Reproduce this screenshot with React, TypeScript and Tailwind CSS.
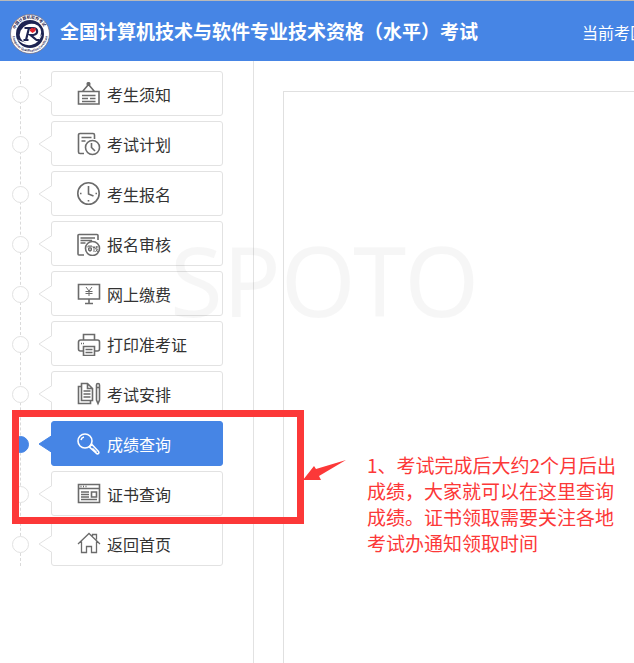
import type { ReactNode } from "react";

type MenuItem = { label: string; icon: ReactNode; active?: boolean };

const MENU: MenuItem[] = [
  {
    label: "考生须知",
    icon: (
      <>
        <path d="M1.500 9.500h20.500v12.500h-20.500zM5.500 9.500l6-7 6 7M5 13.500h13.500M5 16.500h6M13 16.500h5.500M5 19.500h13.500" />
        <circle cx="11.500" cy="2" r="1.300" fill="currentColor" />
      </>
    ),
  },
  {
    label: "考试计划",
    icon: (
      <>
        <path d="M7 21.500H3a1.500 1.500 0 0 1-1.500-1.500V3A1.500 1.500 0 0 1 3 1.500h13A1.500 1.500 0 0 1 17.500 3v4M4.500 5.500h10M4.500 9h4" />
        <circle cx="15.500" cy="15.500" r="7" />
        <path d="M14.500 11v4.500l3.500 3.500" />
      </>
    ),
  },
  {
    label: "考生报名",
    icon: (
      <>
        <circle cx="11.500" cy="11.500" r="10.700" />
        <path d="M11.500 4v8l5 2M3 11.500h1.500M18.500 11.500h1.500M11.500 18v1.500" />
      </>
    ),
  },
  {
    label: "报名审核",
    icon: (
      <g transform="translate(0 1)">
        <path d="M7 22H2a1 1 0 0 1-1-1V2.500a1 1 0 0 1 1-1h18a1 1 0 0 1 1 1V7M3.500 5h14.500M3.500 7.500h11.500M3.500 10h5" />
        <circle cx="15.500" cy="15.500" r="7" />
        <path
          d="M11 14.500v-1.500h4v1.500M11.500 15h3v2.500h-3zM13 13v6M17 13v6M16 14.500h2M18.500 14h2.500M20 13l-1.500 3h2l-2 3M19.500 17l1.500 2"
          strokeWidth="1"
        />
      </g>
    ),
  },
  {
    label: "网上缴费",
    icon: (
      <>
        <path d="M1.500 2.500h21v14.500h-21zM12 17v4M8 21.500h8" />
        <path d="m9 5 3 4 3-4M12 9v5M8.500 9.500h7M8.500 11.500h7" strokeWidth="1" />
      </>
    ),
  },
  {
    label: "打印准考证",
    icon: (
      <>
        <path d="M6.500 8V2.500h11V8M6.500 19h-3a2 2 0 0 1-2-2v-7a2 2 0 0 1 2-2h17a2 2 0 0 1 2 2v7a2 2 0 0 1-2 2h-3M6.500 14.500h11v9h-11zM8.500 17.500h7M8.500 20.500h7" />
        <path d="M4 11.500h1M6 11.500h1" />
      </>
    ),
  },
  {
    label: "考试安排",
    icon: (
      <>
        <path d="M4 4.500H1.500v17h12V19M4.500 1.500h6l5 5v12h-11zM10.500 1.500v5h5M6.500 9h7M6.500 12h7M6.500 15h7" />
        <path d="M19.500 5.500h3V18l-1.500 3.500-1.500-3.500zM19.500 3a1.500 1.500 0 0 1 3 0v2.500h-3z" />
      </>
    ),
  },
  {
    label: "成绩查询",
    active: true,
    icon: (
      <>
        <circle cx="8" cy="9" r="7" />
        <path d="M4 8a4 4 0 0 1 3-3M13 14l2-1.500 6.500 7a1.300 1.300 0 0 1-2 2L12.500 15zM15.500 16.500l4 4" />
      </>
    ),
  },
  {
    label: "证书查询",
    icon: (
      <>
        <path d="M1.500 2.500h21v18h-21zM1.500 6.500h21M3.500 4.500h1M6 4.500h1M8.500 4.500h1" />
        <path d="M4 10h8M4 12.500h8M4 15h8M4 17.500h16M14.500 10h5v5h-5z" />
      </>
    ),
  },
  {
    label: "返回首页",
    icon: (
      <path
        d="M1 12 12 1.500 23 12M4.500 9.500v11h5v-6h5v6h5v-11M15.500 4V2.500h4v5"
        strokeWidth="1.300"
      />
    ),
  },
];

function Logo() {
  return (
    <svg viewBox="0 0 40 40" className="h-10 w-10 shrink-0" aria-hidden="true">
      <defs>
        <path id="seal-top" d="M4.600 20a15.400 15.400 0 0 1 30.800 0" />
        <path id="seal-bottom" d="M2.300 20a17.700 17.700 0 0 0 35.400 0" />
      </defs>
      <circle cx="20" cy="20" r="19.500" fill="#fff" stroke="#777184" strokeWidth="0.800" />
      <circle cx="20" cy="20" r="14" fill="#1d2452" />
      <ellipse cx="20.500" cy="19.500" rx="11" ry="9.500" fill="#fff" transform="rotate(-25 20.500 19.500)" />
      <path d="M7 25c8 6 20 4 25-5-3 11-15 16-25 5Z" fill="#fff" />
      <path
        d="M14.500 14h8c6 0 6 6 1 7h-3l6 5h3M19 14l-3 12M13.500 26h5"
        fill="none"
        stroke="#1d2452"
        strokeWidth="2.200"
      />
      <path d="m20 15.500 2-2 1.500 1 2-1v3.500l-3 2-2.500-2Z" fill="#e3262f" />
      <g fill="#1d2452" fontFamily="Noto Sans CJK SC, sans-serif" fontWeight="700">
        <text fontSize="4">
          <textPath href="#seal-top" startOffset="10%">
            中国计算机软件考试
          </textPath>
        </text>
        <text fontSize="3">
          <textPath href="#seal-bottom" startOffset="4%">
            Computer Qualification Certificate
          </textPath>
        </text>
      </g>
    </svg>
  );
}

function MenuRow({ label, icon, active }: MenuItem) {
  return (
    <li className="flex h-[45px] items-center pl-3">
      <span
        className={`z-10 mt-0.5 h-[17px] w-[17px] shrink-0 rounded-full border ${
          active ? "border-[#4685e5] bg-[#4685e5]" : "border-[#e2e2e2] bg-white"
        }`}
      />
      <svg
        viewBox="0 0 14 20"
        className={`z-10 -mr-px ml-[9px] h-5 w-3.5 shrink-0 ${
          active ? "fill-[#4685e5] stroke-[#4685e5]" : "fill-white stroke-[#e2e2e2]"
        }`}
        aria-hidden="true"
      >
        <path d="M14 1.500 1 10l13 8.500" />
      </svg>
      <a
        href="#"
        aria-current={active ? "page" : undefined}
        className={`flex h-full min-w-0 flex-1 items-center gap-1.5 rounded-[3px] border pl-[25px] pt-px text-base ${
          active
            ? "border-[#4685e5] bg-[#4685e5] text-white"
            : "border-[#e2e2e2] text-[#333]"
        }`}
      >
        <svg
          viewBox="0 0 24 24"
          className={`h-6 w-6 shrink-0 fill-none stroke-current ${
            active ? "text-white" : "text-[#6b6b6b]"
          }`}
          strokeWidth="1.600"
          aria-hidden="true"
        >
          {icon}
        </svg>
        <span className="whitespace-nowrap">{label}</span>
      </a>
    </li>
  );
}

export default function App() {
  return (
    <div className="relative flex h-screen flex-col overflow-hidden bg-white font-['Noto_Sans_CJK_SC',sans-serif]">
      <header className="flex h-[61px] shrink-0 items-center overflow-hidden border-t border-[#b9b9b9] bg-[#4685e5] pl-2.5 text-white">
        <div className="mt-1.5">
          <Logo />
        </div>
        <h1 className="ml-2.5 shrink-0 whitespace-nowrap text-[19px] font-bold">
          全国计算机技术与软件专业技术资格（水平）考试
        </h1>
        <span className="ml-[104px] mt-0.5 shrink-0 whitespace-nowrap text-base">
          当前考区
        </span>
      </header>

      <div className="flex min-h-0 flex-1">
        <nav className="w-[254px] shrink-0 border-r border-[#e2e2e2] pr-[30px] pt-2.5">
          <ul className="relative flex flex-col gap-[5px]">
            <li
              aria-hidden="true"
              className="absolute inset-y-0 left-5 border-l border-dashed border-[#dadada]"
            />
            {MENU.map((item) => (
              <MenuRow key={item.label} {...item} />
            ))}
          </ul>
        </nav>
        <main className="ml-[29px] mt-[30px] flex-1 border-l border-t border-[#e0e0e0]" />
      </div>

      <div
        aria-hidden="true"
        className="pointer-events-none absolute left-[170px] top-[232px] z-20 font-['Noto_Sans',sans-serif] text-[96px] leading-[96px] text-black/[0.035]"
      >
        SPOTO
      </div>

      <div className="absolute left-3 top-[410px] z-20 h-[114px] w-[292px] border-[7px] border-[#fc3838]" />
      <svg
        viewBox="0 0 44 22"
        className="absolute left-[303px] top-[460px] z-20 h-[22px] w-11 fill-[#fc3838]"
        aria-hidden="true"
      >
        <path d="M0 20 11 6l2 3 30-9-27 16 2 4Z" />
      </svg>
      <p className="absolute left-[367px] top-[452px] z-20 w-[252px] text-[19px] leading-[26px] text-[#fc3838]">
        1、考试完成后大约2个月后出成绩，大家就可以在这里查询成绩。证书领取需要关注各地考试办通知领取时间
      </p>
    </div>
  );
}
